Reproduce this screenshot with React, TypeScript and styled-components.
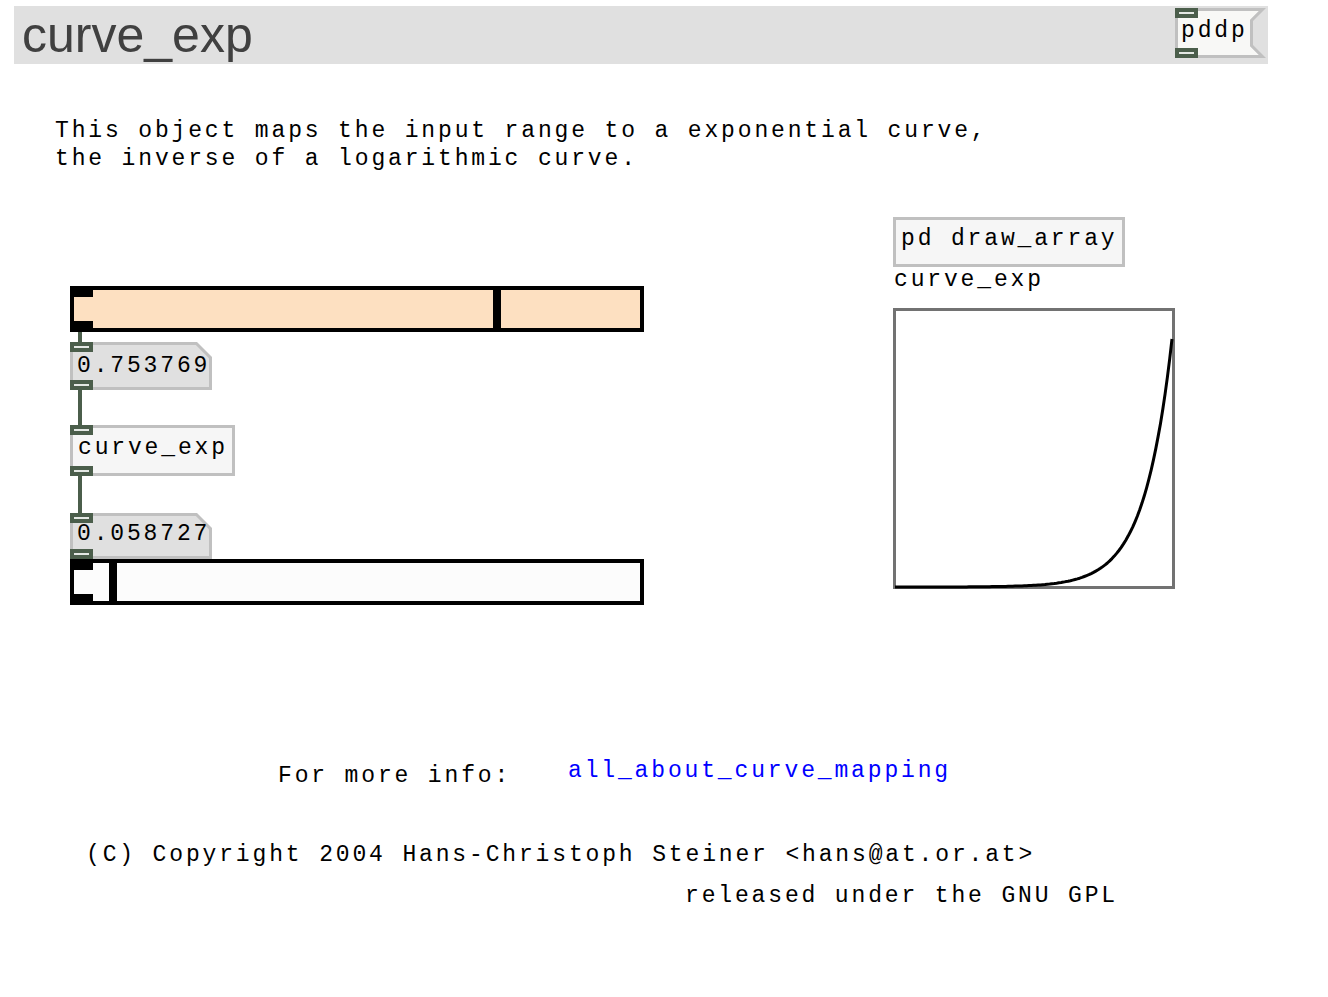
import styled, { createGlobalStyle } from "styled-components";

const mono = `"Liberation Mono", "Courier New", monospace`;
const wireColor = "#4b5e4b";

const GlobalStyle = createGlobalStyle`
    html, body {
        margin: 0;
        padding: 0;
        background: #ffffff;
    }
`;

const Page = styled.div`
    position: relative;
    width: 1328px;
    height: 997px;
    overflow: hidden;
    background: #ffffff;
    font-family: ${mono};
    font-size: 23px;
    line-height: 28px;
    letter-spacing: 2.85px;
    color: #000000;
`;

const TitleBar = styled.header`
    display: flex;
    justify-content: space-between;
    align-items: flex-start;
    margin: 6px 0 0 14px;
    width: 1254px;
    height: 58px;
    background: #e0e0e0;
`;

const Title = styled.h1`
    margin: 0 0 0 8px;
    font-family: "Liberation Sans", Arial, sans-serif;
    font-weight: 400;
    font-size: 50px;
    line-height: 58px;
    letter-spacing: 0;
    color: #404040;
`;

const MessageBox = styled.div`
    position: relative;
    margin: 2px 2px 0 0;
    width: 91px;
    height: 50px;
    box-sizing: border-box;
    padding: 9px 0 0 6px;
    background: #c0c0c0;
    clip-path: polygon(0 0, 100% 0, calc(100% - 13px) 13px, calc(100% - 13px) calc(100% - 13px), 100% 100%, 0 100%);

    &::before {
        content: "";
        position: absolute;
        inset: 3px;
        background: #f8f8f6;
        clip-path: polygon(0 0, calc(100% - 4.2px) 0, calc(100% - 13px) 8.8px, calc(100% - 13px) calc(100% - 8.8px), calc(100% - 4.2px) 100%, 0 100%);
    }

    span {
        position: relative;
    }
`;

// free-floating comments on the patch canvas
const Comment = styled.div<{ $x: number; $y: number; $link?: boolean }>`
    position: absolute;
    left: ${(p) => p.$x}px;
    top: ${(p) => p.$y}px;
    white-space: pre;
    color: ${(p) => (p.$link ? "#0000ff" : "#000000")};
`;

// vertical chain of patch objects: slider -> number -> curve_exp -> number -> slider
const Chain = styled.div<{ $x: number; $y: number }>`
    position: absolute;
    left: ${(p) => p.$x}px;
    top: ${(p) => p.$y}px;
    display: flex;
    flex-direction: column;
    align-items: flex-start;
`;

const ObjectBox = styled.div<{ $w: number; $h: number; $pad: number }>`
    position: relative;
    width: ${(p) => p.$w}px;
    height: ${(p) => p.$h}px;
    box-sizing: border-box;
    padding: ${(p) => p.$pad}px 0 0 5px;
    border: 3px solid #c0c0c0;
    background: #f6f6f6;
    white-space: pre;
`;

const NumberBox = styled.div<{ $h: number; $pad: number }>`
    position: relative;
    width: 142px;
    height: ${(p) => p.$h}px;
    box-sizing: border-box;
    padding: ${(p) => p.$pad}px 0 0 7px;
    background: #c0c0c0;
    clip-path: polygon(0 0, calc(100% - 15px) 0, 100% 15px, 100% 100%, 0 100%);

    &::before {
        content: "";
        position: absolute;
        inset: 3px;
        background: #e0e0e0;
        clip-path: polygon(0 0, calc(100% - 13.2px) 0, 100% 13.2px, 100% 100%, 0 100%);
    }

    span {
        position: relative;
    }
`;

const Port = styled.div<{ $edge: "top" | "bottom"; $black?: boolean; $offset?: number }>`
    position: absolute;
    left: ${(p) => -(p.$offset ?? 0)}px;
    ${(p) => (p.$edge === "top" ? "top" : "bottom")}: ${(p) => -(p.$offset ?? 0)}px;
    width: 23px;
    height: ${(p) => (p.$black ? 11 : 10)}px;
    background: ${(p) => (p.$black ? "#000000" : wireColor)};
    z-index: 2;

    &::after {
        content: "";
        display: ${(p) => (p.$black ? "none" : "block")};
        position: absolute;
        left: 4px;
        right: 4px;
        top: 4px;
        height: 2px;
        background: #e4e8e4;
    }
`;

const Wire = styled.div<{ $h: number }>`
    margin-left: 8px;
    width: 4px;
    height: ${(p) => p.$h}px;
    background: ${wireColor};
`;

const Slider = styled.div<{ $bg: string }>`
    position: relative;
    width: 574px;
    height: 46px;
    box-sizing: border-box;
    border: 4px solid #000000;
    background: ${(p) => p.$bg};
`;

const Knob = styled.div`
    position: absolute;
    top: 0;
    bottom: 0;
    width: 8px;
    background: #000000;
`;

const ArrayColumn = styled.div`
    position: absolute;
    left: 893px;
    top: 217px;
    display: flex;
    flex-direction: column;
    align-items: flex-start;
`;

const ArrayLabel = styled.div`
    margin: -1px 0 0 1px;
    height: 28px;
`;

const Graph = styled.div`
    position: relative;
    margin-top: 14px;
    width: 282px;
    height: 281px;
    box-sizing: border-box;
    border: 3px solid #727272;
    background: #ffffff;

    svg {
        position: absolute;
        left: -3px;
        top: -3px;
        overflow: visible;
    }
`;

const HSlider = ({ bg, value }: { bg: string; value: number }) => (
    <Slider $bg={bg}>
        <Port $edge="top" $black $offset={4} />
        <Port $edge="bottom" $black $offset={4} />
        <Knob style={{ left: 2.5 + value * 553 }} />
    </Slider>
);

// exponential table, like the one curve_exp fills
const curvePoints = () => {
    const pts: string[] = [];
    for (let i = 0; i <= 120; i++) {
        const t = i / 120;
        const v = 0.892 * Math.exp(10 * (t - 1));
        pts.push(`${(2 + t * 277).toFixed(1)},${(279 - v * 278).toFixed(1)}`);
    }
    return pts.join(" ");
};

const App = () => {
    return (
        <Page>
            <GlobalStyle />
            <TitleBar>
                <Title>curve_exp</Title>
                <MessageBox>
                    <Port $edge="top" />
                    <Port $edge="bottom" />
                    <span>pddp</span>
                </MessageBox>
            </TitleBar>

            <Comment $x={55} $y={117}>
                {"This object maps the input range to a exponential curve,\nthe inverse of a logarithmic curve."}
            </Comment>

            <ArrayColumn>
                <ObjectBox $w={232} $h={50} $pad={5}>
                    pd draw_array
                </ObjectBox>
                <ArrayLabel>curve_exp</ArrayLabel>
                <Graph>
                    <svg width="282" height="281" viewBox="0 0 282 281">
                        <polyline
                            points={curvePoints()}
                            fill="none"
                            stroke="#000000"
                            strokeWidth="3"
                            strokeLinejoin="round"
                        />
                    </svg>
                </Graph>
            </ArrayColumn>

            <Chain $x={70} $y={286}>
                <HSlider bg="#fde0c1" value={0.753769} />
                <Wire $h={10} />
                <NumberBox $h={48} $pad={10}>
                    <Port $edge="top" />
                    <Port $edge="bottom" />
                    <span>0.753769</span>
                </NumberBox>
                <Wire $h={35} />
                <ObjectBox $w={165} $h={51} $pad={6}>
                    <Port $edge="top" $offset={3} />
                    <Port $edge="bottom" $offset={3} />
                    curve_exp
                </ObjectBox>
                <Wire $h={37} />
                <NumberBox $h={46} $pad={7}>
                    <Port $edge="top" />
                    <Port $edge="bottom" />
                    <span>0.058727</span>
                </NumberBox>
                <HSlider bg="#fcfcfc" value={0.058727} />
            </Chain>

            <Comment $x={278} $y={762}>For more info:</Comment>
            <Comment $x={568} $y={757} $link>all_about_curve_mapping</Comment>
            <Comment $x={86} $y={841}>
                {"(C) Copyright 2004 Hans-Christoph Steiner <hans@at.or.at>"}
            </Comment>
            <Comment $x={685} $y={882}>released under the GNU GPL</Comment>
        </Page>
    );
};

export default App;
